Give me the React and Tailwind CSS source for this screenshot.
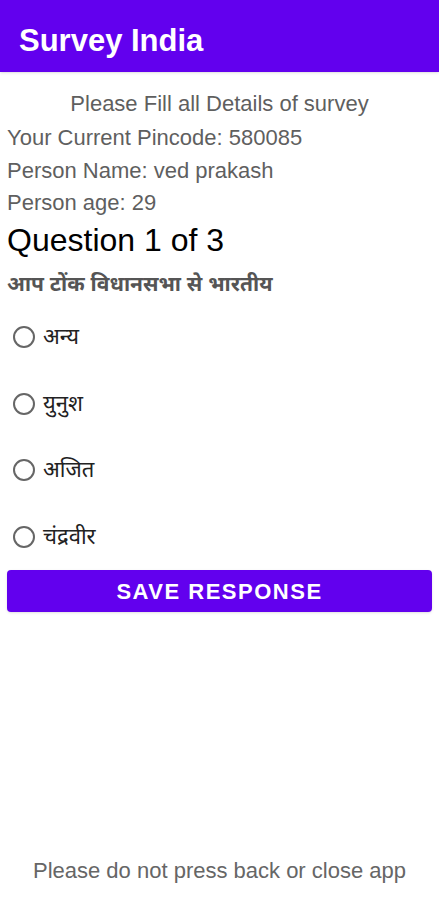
import React, { useState } from 'react';

const options = ['अन्य', 'युनुश', 'अजित', 'चंद्रवीर'];

function App() {
  const [selected, setSelected] = useState(null);

  return (
    <div className="h-[900px] bg-white flex flex-col font-['Liberation_Sans','Noto_Sans',sans-serif]">
      <header className="h-[72px] bg-[#6200ee] flex items-end pb-[16px] px-[19px] shadow-sm">
        <h1 className="text-white text-[31px] leading-none font-bold">Survey India</h1>
      </header>

      <div className="px-[7px] pt-[18px] flex flex-col">
        <p className="text-center text-[22px] leading-[28px] text-[#5f5f5f]">Please Fill all Details of survey</p>
        <p className="text-[22px] leading-[33px] text-[#5f5f5f] mt-[3px]">Your Current Pincode: 580085</p>
        <p className="text-[22px] leading-[33px] text-[#5f5f5f]">Person Name: ved prakash</p>
        <p className="text-[22px] leading-[32px] text-[#5f5f5f]">Person age: 29</p>
        <h2 className="text-[32px] leading-[42px] text-black">Question 1 of 3</h2>
        <p className="text-[21px] leading-[30px] font-bold text-[#555] mt-[8px]">आप टोंक विधानसभा से भारतीय</p>

        <div className="flex flex-col mt-[22px]">
          {options.map((o, i) => (
            <label key={o} className="h-[66.5px] flex items-start gap-[8px] pl-[6px] cursor-pointer" onClick={() => setSelected(i)}>
              <span className="w-[22px] h-[22px] mt-[5px] rounded-full border-2 border-[#666] flex items-center justify-center">
                {selected === i && <span className="w-[11px] h-[11px] rounded-full bg-[#6200ee]" />}
              </span>
              <span className="text-[22px] leading-[32px] text-[#222]">{o}</span>
            </label>
          ))}
        </div>

        <button className="mt-[-17px] h-[42px] w-full bg-[#6200ee] rounded-[4px] text-white text-[22px] font-bold tracking-[1.5px] shadow">
          SAVE RESPONSE
        </button>
      </div>

      <div className="flex-1" />
      <p className="text-center text-[22px] text-[#666] pb-[13px]">Please do not press back or close app</p>
    </div>
  );
}

export default App;
